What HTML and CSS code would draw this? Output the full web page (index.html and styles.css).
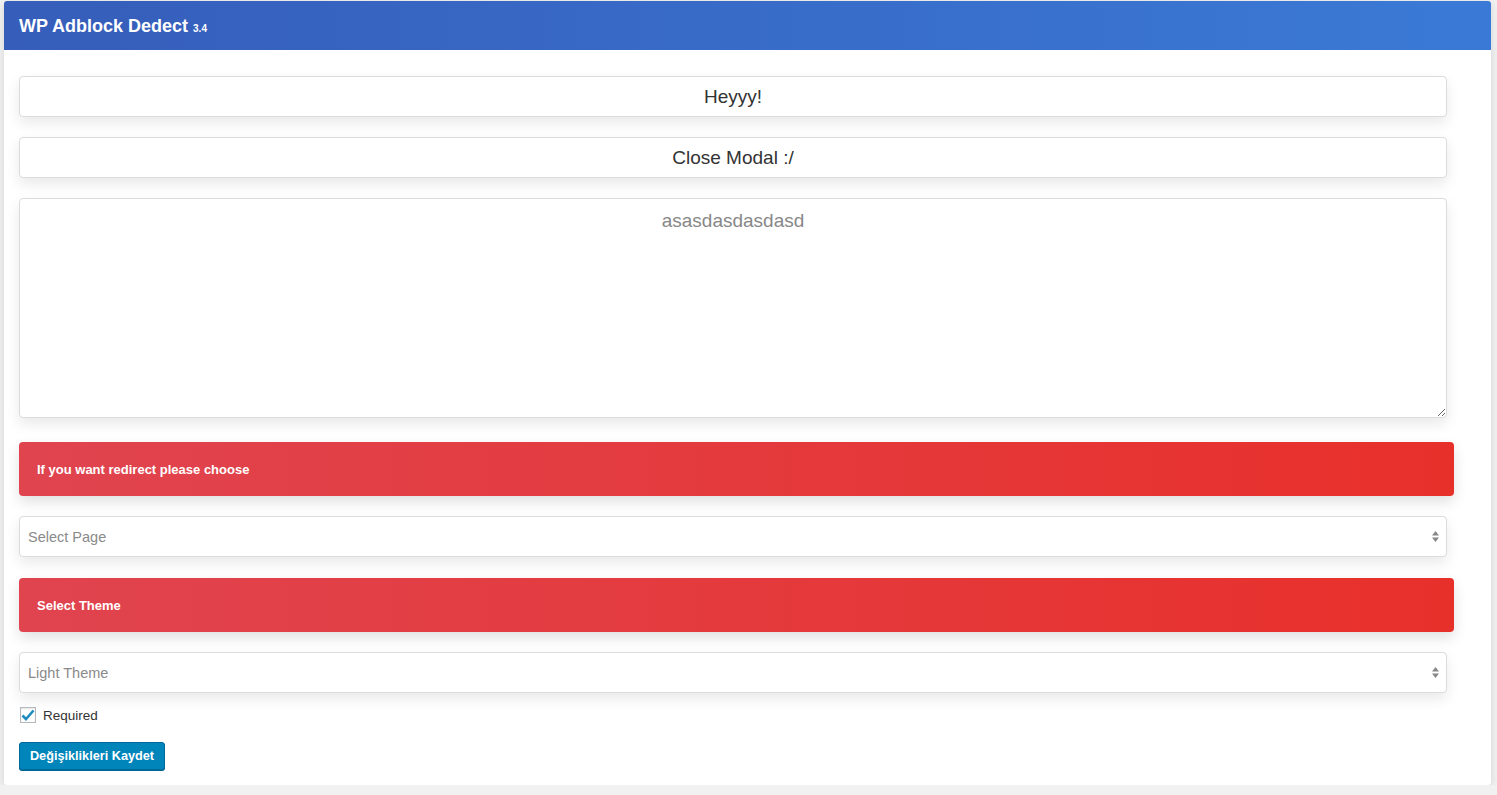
FILE: index.html
```html
<!DOCTYPE html>
<html>
<head>
<meta charset="utf-8">
<link rel="stylesheet" href="styles.css">
</head>
<body>
<div class="card">
  <div class="card-header">WP Adblock Dedect <small>3.4</small></div>
  <div class="card-body">
    <input class="field center" type="text" value="Heyyy!">
    <input class="field center" type="text" value="Close Modal :/">
    <textarea class="field area" placeholder="asasdasdasdasd"></textarea>
    <div class="alert">If you want redirect please choose</div>
    <div class="field select"><span>Select Page</span><svg width="7" height="11" viewBox="0 0 7 11"><path d="M3.5 0L7 4.5H0Z M3.5 11L0 6.5H7Z" fill="#888"/></svg></div>
    <div class="alert">Select Theme</div>
    <div class="field select last"><span>Light Theme</span><svg width="7" height="11" viewBox="0 0 7 11"><path d="M3.5 0L7 4.5H0Z M3.5 11L0 6.5H7Z" fill="#888"/></svg></div>
    <label class="check"><span class="box"><svg width="14" height="12" viewBox="0 0 14 12"><path d="M1.5 6.5L5 10L12.5 1.5" fill="none" stroke="#1e8cbe" stroke-width="2.6"/></svg></span>Required</label>
    <div><button class="btn">Değişiklikleri Kaydet</button></div>
  </div>
</div>
</body>
</html>
```
FILE: styles.css
```css
html, body { margin: 0; padding: 0; }
body {
  background: #f1f1f1;
  font-family: "Helvetica Neue", "Liberation Sans", Arial, sans-serif;
  padding: 1px 0 0 4px;
}
.card {
  width: 1487px;
  height: 784px;
  background: #fff;
  box-shadow: 0 2px 8px rgba(0,0,0,0.12);
  border-radius: 3px;
  box-sizing: border-box;
}
.card-header {
  height: 49px;
  box-sizing: border-box;
  padding: 15px 15px 0;
  background: linear-gradient(90deg, #365dba 0%, #3a7ad6 100%);
  color: #fff;
  font-size: 18px;
  font-weight: 600;
  border-radius: 3px 3px 0 0;
}
.card-header small { font-size: 10px; font-weight: 600; }
.card-body {
  padding: 26px 15px 15px;
  display: flex;
  flex-direction: column;
}
.field {
  width: 1428px;
  box-sizing: border-box;
  border: 1px solid #dcdcdc;
  border-radius: 4px;
  background: #fff;
  box-shadow: 0 6px 14px rgba(0,0,0,0.09);
  font-family: "Helvetica Neue", "Liberation Sans", Arial, sans-serif;
  margin: 0;
}
.center {
  height: 41px;
  text-align: center;
  font-size: 19px;
  color: #333;
  margin-bottom: 20px;
  outline: none;
}
.area {
  height: 220px;
  font-size: 19px;
  text-align: center;
  padding: 11px 12px;
  margin-bottom: 24px;
  resize: vertical;
}
.area::placeholder { color: #888; }
.alert {
  width: 1435px;
  height: 54px;
  box-sizing: border-box;
  border-radius: 4px;
  background: linear-gradient(90deg, #e0444f 0%, #e8302b 100%);
  color: #fff;
  font-size: 13px;
  font-weight: 600;
  padding: 20px 18px 0;
  box-shadow: 0 6px 14px rgba(0,0,0,0.12);
  margin-bottom: 20px;
}
.select {
  height: 41px;
  display: flex;
  align-items: center;
  justify-content: space-between;
  padding: 0 7px 0 8px;
  font-size: 14.5px;
  color: #8a8a8a;
  margin-bottom: 21px;
}
.select.last { margin-bottom: 14px; }
.check {
  display: flex;
  align-items: center;
  font-size: 13.5px;
  color: #333;
  height: 16px;
  margin-bottom: 19px;
}
.box {
  width: 14px;
  height: 14px;
  border: 1px solid #b4b9be;
  box-shadow: inset 0 1px 2px rgba(0,0,0,0.1);
  margin: 0 7px 0 1px;
  display: flex;
  align-items: center;
  justify-content: center;
  background: #fff;
}
.btn {
  height: 28px;
  width: 146px;
  padding: 0;
  white-space: nowrap;
  background: #0085ba;
  border: 1px solid #006799;
  border-radius: 3px;
  box-shadow: 0 1px 0 #006799;
  color: #fff;
  font-family: "Helvetica Neue", "Liberation Sans", Arial, sans-serif;
  font-size: 12.7px;
  font-weight: 600;
}
```
